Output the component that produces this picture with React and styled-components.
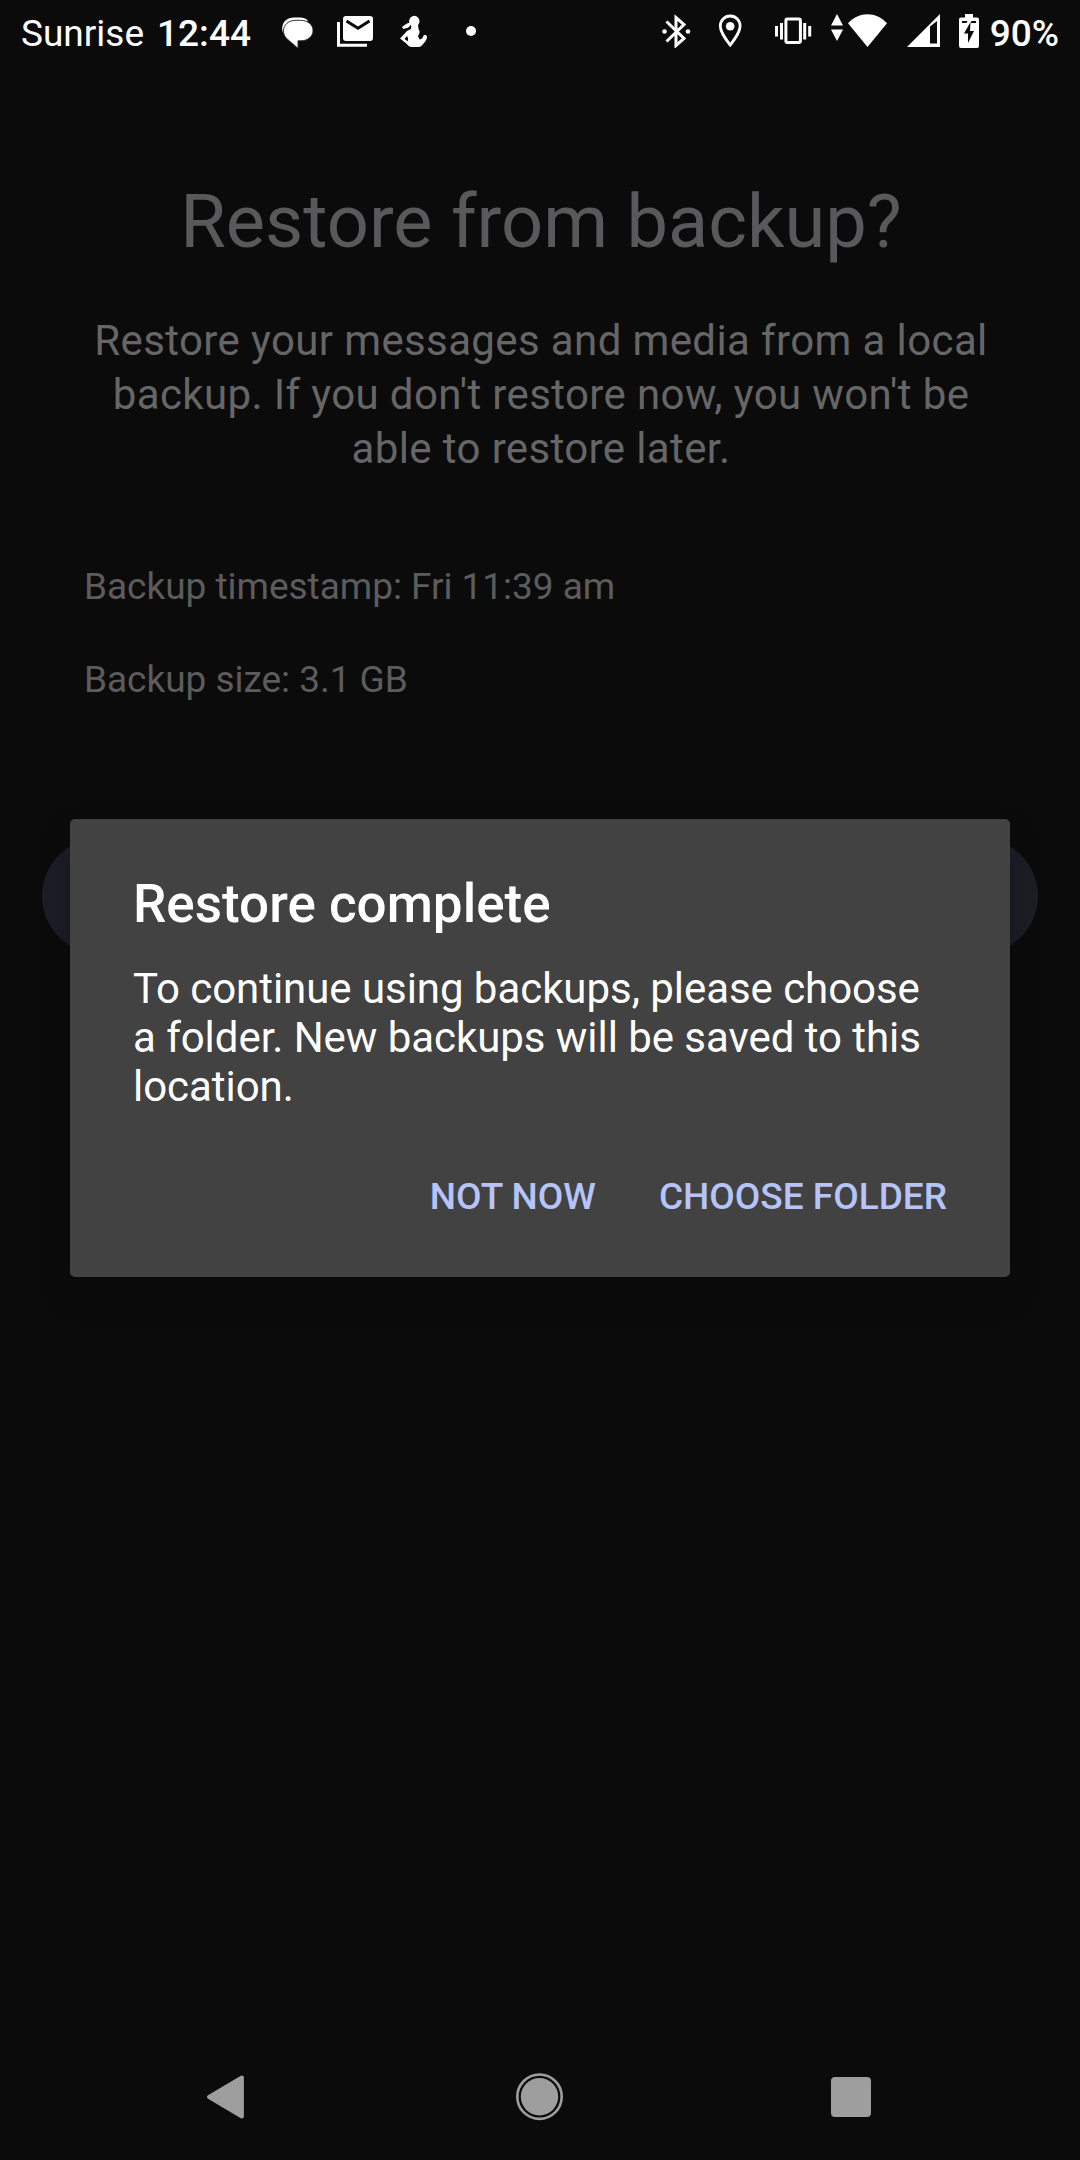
import React from "react";
import styled, { createGlobalStyle } from "styled-components";

const GlobalStyle = createGlobalStyle`
  *, *::before, *::after { box-sizing: border-box; }
  body { margin: 0; background: #0b0b0b; }
  p, h1, h2 { margin: 0; font-weight: 400; }
`;

const Screen = styled.div`
  position: relative;
  display: flex;
  flex-direction: column;
  width: 1080px;
  height: 2160px;
  overflow: hidden;
  background: #0b0b0b;
  font-family: Roboto, "Noto Sans", sans-serif;
`;

const StatusBar = styled.header`
  display: flex;
  align-items: center;
  justify-content: space-between;
  height: 66px;
  padding: 0 21px;
  color: #fff;
  font-size: 37px;
  line-height: 43px;
`;

const StatusGroup = styled.div`
  display: flex;
  align-items: center;
  height: 66px;
`;

const StatusText = styled.span`
  font-weight: ${(p) => (p.$strong ? 500 : 400)};
  margin-left: ${(p) => p.$gap || 0}px;
  white-space: nowrap;
`;

const StatusIcon = styled.svg`
  flex: none;
  display: block;
  margin-left: ${(p) => p.$gap || 0}px;
  margin-bottom: 4px;
`;

const Content = styled.main`
  flex: 1;
  display: flex;
  flex-direction: column;
`;

const Title = styled.h1`
  margin-top: 109px;
  padding-left: 2px;
  color: #59595b;
  font-size: 74px;
  line-height: 93px;
  text-align: center;
`;

const Description = styled.p`
  margin-top: 46px;
  padding: 0 83px 0 85px;
  color: #666;
  font-size: 42px;
  line-height: 54px;
  letter-spacing: 0.38px;
  text-align: center;
`;

const Details = styled.div`
  display: flex;
  flex-direction: column;
  gap: 40px;
  margin-top: 84px;
  padding: 0 84px;
`;

const Detail = styled.p`
  color: #5c5c5c;
  font-size: 37px;
  line-height: 53px;
  letter-spacing: -0.03px;
`;

const RestoreButton = styled.div`
  height: 116px;
  margin: 132px 42px 0;
  border-radius: 58px;
  background: #1c1d25;
`;

const Dialog = styled.section`
  position: absolute;
  top: 819px;
  left: 70px;
  width: 940px;
  height: 458px;
  padding: 54px 63px 0;
  border-radius: 5px;
  background: #424242;
  color: #fff;
  box-shadow: 0 16px 36px rgba(0, 0, 0, 0.2);
`;

const DialogTitle = styled.h2`
  font-size: 53px;
  font-weight: 500;
  line-height: 62px;
`;

const DialogText = styled.p`
  margin-top: 29px;
  font-size: 42px;
  line-height: 49px;
  letter-spacing: -0.05px;
`;

const DialogActions = styled.div`
  display: flex;
  justify-content: flex-end;
  gap: 63px;
  margin-top: 64px;
`;

const Action = styled.button`
  padding: 0;
  border: 0;
  background: none;
  color: #b6c4fa;
  font: 500 37px/43px Roboto, sans-serif;
  white-space: nowrap;
`;

const NavBar = styled.nav`
  display: flex;
  align-items: flex-start;
  justify-content: space-between;
  height: 96px;
  padding: 8px 208px 0 206px;
`;

const NavIcon = styled.svg`
  display: block;
  width: 50px;
  height: 50px;
`;

const ChatIcon = () => (
  <StatusIcon $gap={30} width="34" height="34" viewBox="282 14 34 34">
    <path d="M284 32.500c-3-8 2.500-15 11-15h6c3.500 0 6 1 8 3z" fill="#fff" />
    <path d="M297 20.300h4.500c7.500 0 12.500 4.500 12.500 10.200s-5 10.300-12 10.300h-3v7.500l-10.500-9c-2.500-2.500-4-4.500-4-8.500 0-6 5-10.500 12.500-10.500z" fill="#fff" stroke="#333" strokeWidth="1" />
  </StatusIcon>
);

const MailIcon = () => (
  <StatusIcon $gap={21} width="38" height="34" viewBox="337 14 38 34">
    <path d="M339.500 22v23.300H368" fill="none" stroke="#fff" strokeWidth="3" />
    <rect x="344" y="16" width="30" height="25" rx="3" fill="#fff" />
    <path d="M347.500 21 359 28.300l11.500-7.300" fill="none" stroke="#0b0b0b" strokeWidth="3" />
  </StatusIcon>
);

const FigureIcon = () => (
  <StatusIcon $gap={25} width="30" height="34" viewBox="400 14 30 34">
    <ellipse cx="415.300" cy="21.300" rx="5.200" ry="5.500" fill="#fff" />
    <path d="m411 23-3 1-4.500 3 1 1.500 5-1.500 2-3z" fill="#fff" stroke="#fff" strokeLinejoin="round" />
    <path fillRule="evenodd" d="M412.500 25h6.500l.5 4c1.500 2 1.500 4-.5 7l1.500 3.500c2.500-.5 3.500-1.500 4-4l2-.8 1.500 1.500c0 4-2.500 6.500-6 10-2 1.200-9.500 1.200-12 0l-3-3-6-4.700 7-7.500 4-2zM408 36l-2.500 3 3.200 2.200c.8-1.800.4-3.700-.7-5.200z" fill="#fff" />
  </StatusIcon>
);

const DotIcon = () => (
  <StatusIcon $gap={37} width="10" height="10" viewBox="0 0 10 10">
    <circle cx="5" cy="5" r="5" fill="#fff" />
  </StatusIcon>
);

const BluetoothIcon = () => (
  <StatusIcon width="30" height="34" viewBox="661 14 30 34">
    <path d="m666.500 21.500 17.500 17-8 7V17.500l8 7-17.500 17" fill="none" stroke="#fff" strokeWidth="3" />
    <circle cx="664.500" cy="31.500" r="2.300" fill="#fff" />
    <circle cx="688" cy="31.500" r="2.300" fill="#fff" />
  </StatusIcon>
);

const LocationIcon = () => (
  <StatusIcon $gap={27} width="24" height="34" viewBox="718 14 24 34">
    <path d="M730.200 16c5.800 0 9.900 4.500 9.900 10 0 7-9.900 19-9.900 19s-9.900-12-9.900-19c0-5.500 4.100-10 9.900-10z" fill="none" stroke="#fff" strokeWidth="2.800" />
    <circle cx="730.200" cy="26.300" r="4.300" fill="#fff" />
  </StatusIcon>
);

const VibrateIcon = () => (
  <StatusIcon $gap={32} width="38" height="34" viewBox="774 14 38 34">
    <rect x="785.900" y="18.900" width="14.500" height="23.500" rx="1.500" fill="none" stroke="#fff" strokeWidth="3" />
    <path d="M776.500 26v10.500M781.500 23v16.500M804.700 23v16.500M809.700 26v10.500" stroke="#fff" strokeWidth="3" />
  </StatusIcon>
);

const WifiIcon = () => (
  <StatusIcon $gap={19} width="57" height="34" viewBox="831 14 57 34">
    <path d="m837 14 6 11.500h-12zM831 29.500h12L837 41z" fill="#fff" />
    <path d="M848 23.200c11-12 28-12 39 0L867.500 47z" fill="#fff" />
  </StatusIcon>
);

const SignalIcon = () => (
  <StatusIcon $gap={19} width="34" height="34" viewBox="907 14 34 34">
    <path fillRule="evenodd" d="M907 47 940 14v33zM930 26.500v17h7V21z" fill="#fff" />
  </StatusIcon>
);

const BatteryIcon = () => (
  <StatusIcon $gap={18} width="21" height="34" viewBox="959 14 21 34">
    <path d="M965 14h8v3.500h4q2 0 2 2V46q0 2-2 2h-16q-2 0-2-2V19.500q0-2 2-2h4z" fill="#fff" />
    <path d="M962 21h5.500l-1 2H962zM971.500 21h4.500v2h-5.500z" fill="#0b0b0b" />
    <path d="m970.500 22-6.500 11.500h4V43l6-12h-4z" fill="#0b0b0b" />
  </StatusIcon>
);

export default function App() {
  return (
    <>
      <GlobalStyle />
      <Screen>
        <StatusBar>
          <StatusGroup>
            <StatusText>Sunrise</StatusText>
            <StatusText $strong $gap={13}>12:44</StatusText>
            <ChatIcon />
            <MailIcon />
            <FigureIcon />
            <DotIcon />
          </StatusGroup>
          <StatusGroup>
            <BluetoothIcon />
            <LocationIcon />
            <VibrateIcon />
            <WifiIcon />
            <SignalIcon />
            <BatteryIcon />
            <StatusText $strong $gap={10}>90%</StatusText>
          </StatusGroup>
        </StatusBar>

        <Content>
          <Title>Restore from backup?</Title>
          <Description>
            Restore your messages and media from a local
            <br />
            backup. If you don't restore now, you won't be
            <br />
            able to restore later.
          </Description>
          <Details>
            <Detail>Backup timestamp: Fri 11:39 am</Detail>
            <Detail>Backup size: 3.1 GB</Detail>
          </Details>
          <RestoreButton />
        </Content>

        <Dialog role="dialog">
          <DialogTitle>Restore complete</DialogTitle>
          <DialogText>
            To continue using backups, please choose
            <br />a folder. New backups will be saved to this
            <br />
            location.
          </DialogText>
          <DialogActions>
            <Action>NOT NOW</Action>
            <Action>CHOOSE FOLDER</Action>
          </DialogActions>
        </Dialog>

        <NavBar>
          <NavIcon viewBox="0 0 50 50">
            <path d="M3 25 35.900 5.500V44.500z" fill="#9e9e9e" stroke="#9e9e9e" strokeWidth="4" strokeLinejoin="round" />
          </NavIcon>
          <NavIcon viewBox="0 0 50 50">
            <circle cx="25.500" cy="24.700" r="22.200" fill="none" stroke="#9e9e9e" strokeWidth="2.600" />
            <circle cx="25.500" cy="24.700" r="18.700" fill="#9e9e9e" />
          </NavIcon>
          <NavIcon viewBox="0 0 50 50">
            <rect x="9" y="5" width="40" height="40" rx="4" fill="#9e9e9e" />
          </NavIcon>
        </NavBar>
      </Screen>
    </>
  );
}
